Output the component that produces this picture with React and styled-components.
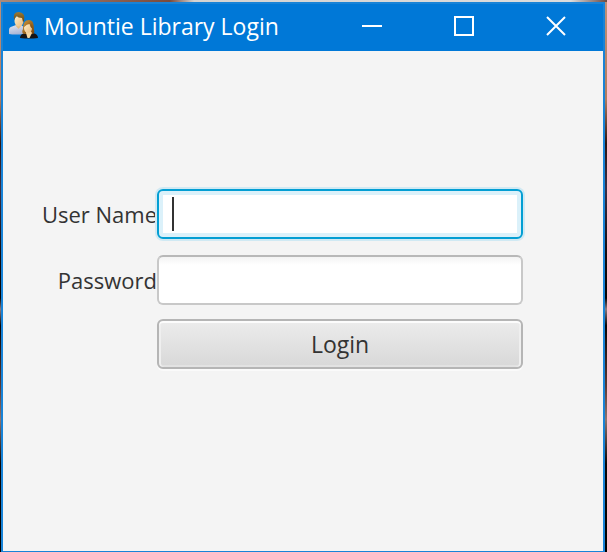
import React, { useState } from "react";
import styled, { createGlobalStyle, css } from "styled-components";

const GlobalStyle = createGlobalStyle`
  * { box-sizing: border-box; }
  body { margin: 0; font-family: "Open Sans", "Noto Sans", sans-serif; }
`;

const Desktop = styled.div`
  display: flex;
  min-height: 100vh;
  padding: 2px 2px 0 1px;
  background:
    linear-gradient(90deg, #a98b7d, #7b4a3a 28%, #d5d3d1 32%, #dcdcdc 94%, #6b4a44) top / 100% 2px no-repeat,
    linear-gradient(180deg, #c09078, #b07c60 18%, #2c1512 26%, #3a3048 34%, #120c10 46%, #050304 54%, #8a7a80 56%, #080405 59%, #5b3a36 70%, #8d7470 76%, #0a0506 84%, #000 100%);
`;

const Window = styled.main`
  flex: 1;
  display: flex;
  flex-direction: column;
  border: 2px solid #1883d7;
  border-bottom-width: 1px;
  background: #f4f4f4;
`;

const TitleBar = styled.header`
  display: flex;
  align-items: center;
  height: 47px;
  padding: 0 1px 3px 5px;
  background: #0078d7;
  color: #fff;
`;

const Title = styled.h1`
  flex: 1;
  margin: 0 0 0 6px;
  font-size: 23px;
  font-weight: 400;
  line-height: 32px;
  white-space: nowrap;
`;

const Controls = styled.div`
  display: flex;
  align-self: stretch;
`;

const WindowButton = styled.button`
  display: flex;
  align-items: center;
  justify-content: center;
  width: 92px;
  padding: 0;
  border: 0;
  background: transparent;
  color: #fff;
`;

const LoginForm = styled.form`
  display: flex;
  flex-direction: column;
  gap: 14px;
  padding: 138px 80px 0 0;
`;

const Fields = styled.div`
  display: flex;
  flex-direction: column;
  gap: 16px;
`;

const Row = styled.div`
  display: grid;
  grid-template-columns: 154px 1fr;
  align-items: center;
`;

const Label = styled.label`
  color: #333;
  font-size: 22px;
  line-height: 32px;
  text-align: right;
  white-space: nowrap;
`;

const InputBox = styled.div`
  position: relative;
  display: flex;
`;

const TextInput = styled.input`
  width: 100%;
  height: 50px;
  padding: 0 13px;
  border: 2px solid #c8c8c8;
  border-top-color: #b8b8b8;
  border-radius: 6px;
  outline: 0;
  background: linear-gradient(#f3f3f3, #fff 8px);
  color: #333;
  font: 23px "Open Sans", "Noto Sans", sans-serif;
  ${(p) => p.$active && css`
    border-color: #039ed3;
    background: #fff;
    box-shadow: 0 0 0 2px #d0e9f3, inset 0 0 0 4px #dbf1fa;
    caret-color: transparent;
  `}
`;

const Caret = styled.span`
  position: absolute;
  left: 15px;
  top: 8px;
  width: 2px;
  height: 34px;
  background: #333;
`;

const LoginButton = styled.button`
  grid-column: 2;
  height: 50px;
  padding: 0 0 1px;
  border: 2px solid #b5b5b5;
  border-radius: 6px;
  background: linear-gradient(#ececec, #d8d8d8);
  box-shadow: 0 2px 0 #fafafa, inset 0 2px 0 #fcfcfc, inset 2px 0 0 #efefef,
    inset -2px 0 0 #efefef, inset 0 -2px 0 #e2e2e2;
  color: #333;
  font: 23px "Open Sans", "Noto Sans", sans-serif;
`;

function PeopleIcon() {
  return (
    <svg width="30" height="28" viewBox="0 0 30 28" aria-hidden="true">
      <defs>
        <linearGradient id="shirt" x1="0" y1="0" x2="0.3" y2="1">
          <stop offset="0" stopColor="#e4e8f3" />
          <stop offset="1" stopColor="#aab6d6" />
        </linearGradient>
        <linearGradient id="hair" x1="0" y1="0" x2="0" y2="1">
          <stop offset="0" stopColor="#9c7a36" />
          <stop offset="1" stopColor="#60430f" />
        </linearGradient>
        <linearGradient id="blonde" x1="0" y1="0" x2="1" y2="1">
          <stop offset="0" stopColor="#cf9638" />
          <stop offset="1" stopColor="#73430e" />
        </linearGradient>
        <linearGradient id="skin" x1="0" y1="0" x2="1" y2="1">
          <stop offset="0" stopColor="#fff0cc" />
          <stop offset="1" stopColor="#e8ba7d" />
        </linearGradient>
      </defs>
      <path d="M1 22V18Q1 15 4 14.500L8 13H13L16 15V22Q7 23 1 22Z" fill="url(#shirt)" />
      <path d="M7.500 13.500L10.500 17L13.500 13.500V10H8.500Z" fill="#e6bb7f" />
      <ellipse cx="11" cy="9" rx="4.500" ry="5.500" fill="url(#skin)" />
      <path d="M6.500 8Q4 0 11 0Q18 1 16 9L15 10L14 6Q10 6 8.500 4L7 6Z" fill="url(#hair)" />
      <path d="M12 26Q12 22 17 21H25Q30 22 30 26Q21 27 12 26Z" fill="#171515" />
      <path d="M16 22Q13 21 15 17C15 11 17 8 21 8C25 8 26 12 26 18Q27 21 25 22Z" fill="url(#blonde)" />
      <path d="M18 21L19.500 26H21.500L24 21L22 18H18Z" fill="#f6d6a0" />
      <ellipse cx="20" cy="16" rx="4" ry="5" fill="url(#skin)" />
      <path d="M16 15Q16 10 21 9Q25 11 24.500 17Q22 15 21.500 12Q19 12 16 15Z" fill="url(#blonde)" />
    </svg>
  );
}

function ControlIcon({ d }) {
  return (
    <svg width="20" height="20" viewBox="0 0 20 20" fill="none" stroke="currentColor" strokeWidth="2" aria-hidden="true">
      <path d={d} />
    </svg>
  );
}

export default function App() {
  const [userName, setUserName] = useState("");
  return (
    <Desktop>
      <GlobalStyle />
      <Window>
        <TitleBar>
          <PeopleIcon />
          <Title>Mountie Library Login</Title>
          <Controls>
            <WindowButton type="button" aria-label="Minimize"><ControlIcon d="M0 10H20" /></WindowButton>
            <WindowButton type="button" aria-label="Maximize"><ControlIcon d="M1 1H19V19H1Z" /></WindowButton>
            <WindowButton type="button" aria-label="Close"><ControlIcon d="M1 1L19 19M19 1L1 19" /></WindowButton>
          </Controls>
        </TitleBar>
        <LoginForm onSubmit={(e) => e.preventDefault()}>
          <Fields>
            <Row>
              <Label htmlFor="user-name">User Name</Label>
              <InputBox>
                <TextInput
                  $active
                  id="user-name"
                  type="text"
                  autoComplete="off"
                  value={userName}
                  onChange={(e) => setUserName(e.target.value)}
                />
                {userName === "" && <Caret />}
              </InputBox>
            </Row>
            <Row>
              <Label htmlFor="password">Password</Label>
              <InputBox>
                <TextInput id="password" type="password" />
              </InputBox>
            </Row>
          </Fields>
          <Row>
            <LoginButton type="submit">Login</LoginButton>
          </Row>
        </LoginForm>
      </Window>
    </Desktop>
  );
}
